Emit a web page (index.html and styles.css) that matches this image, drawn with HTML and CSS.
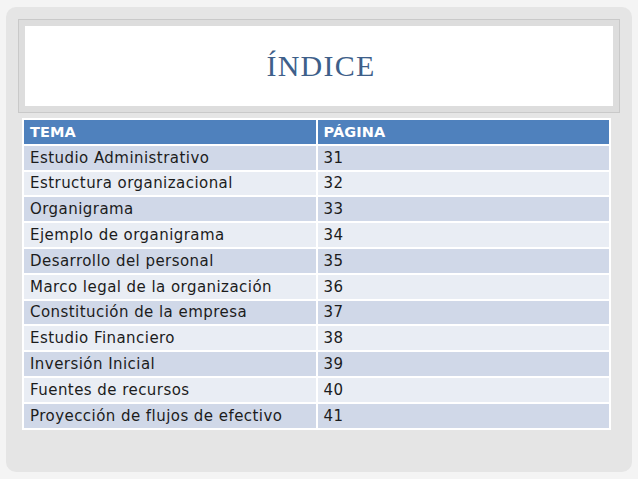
FILE: index.html
```html
<!DOCTYPE html>
<html lang="es">
<head>
<meta charset="utf-8">
<title>Índice</title>
<link rel="stylesheet" href="styles.css">
</head>
<body>
<div class="slide">
  <div class="title-box"><h1 class="title">ÍNDICE</h1></div>
  <table class="index">
    <thead>
      <tr><th>TEMA</th><th>PÁGINA</th></tr>
    </thead>
    <tbody>
      <tr><td>Estudio Administrativo</td><td>31</td></tr>
      <tr><td>Estructura organizacional</td><td>32</td></tr>
      <tr><td>Organigrama</td><td>33</td></tr>
      <tr><td>Ejemplo de organigrama</td><td>34</td></tr>
      <tr><td>Desarrollo del personal</td><td>35</td></tr>
      <tr><td>Marco legal de la organización</td><td>36</td></tr>
      <tr><td>Constitución de la empresa</td><td>37</td></tr>
      <tr><td>Estudio Financiero</td><td>38</td></tr>
      <tr><td>Inversión Inicial</td><td>39</td></tr>
      <tr><td>Fuentes de recursos</td><td>40</td></tr>
      <tr><td>Proyección de flujos de efectivo</td><td>41</td></tr>
    </tbody>
  </table>
</div>
</body>
</html>
```

FILE: styles.css
```css
html, body {
  margin: 0;
  padding: 0;
  background: #f4f4f4;
  width: 638px;
  height: 479px;
  overflow: hidden;
}
.slide {
  box-sizing: border-box;
  margin: 7px 0 0 6px;
  width: 626px;
  height: 465px;
  border-radius: 10px;
  background: #e5e5e5;
  padding: 13px 0 0 13px;
}
.title-box {
  box-sizing: border-box;
  width: 600px;
  height: 92px;
  background: #ffffff;
  border: 6px solid #dddddd;
  box-shadow: 0 0 0 1px #c9c9c9;
  display: flex;
  align-items: center;
  justify-content: center;
}
.title {
  margin: 0;
  font-family: "Liberation Serif", "Times New Roman", serif;
  font-weight: normal;
  font-size: 30px;
  color: #3e5f8a;
  letter-spacing: 1.2px;
  padding: 0 0 0 4px;
}
.index {
  margin: 6px 0 0 3px;
  width: 589px;
  border-collapse: collapse;
  table-layout: fixed;
  font-family: "DejaVu Sans", "Liberation Sans", sans-serif;
  font-size: 15px;
  letter-spacing: 0.45px;
  color: #1c1c1c;
}
.index th, .index td {
  border: 2px solid #ffffff;
  height: 23.8px;
  padding: 0 0 0 6px;
  text-align: left;
  vertical-align: middle;
  white-space: nowrap;
}
.index th {
  background: #4f81bd;
  color: #ffffff;
  font-weight: bold;
  font-size: 14.5px;
  letter-spacing: 0.1px;
}
.index tbody tr:nth-child(odd) td {
  background: #d0d8e8;
}
.index tbody tr:nth-child(even) td {
  background: #e9edf4;
}
```
